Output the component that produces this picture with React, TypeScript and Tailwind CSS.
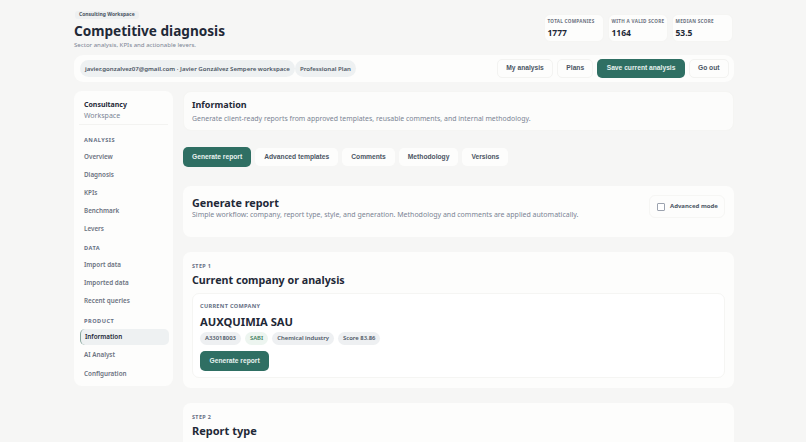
const NOTO = "font-['Noto_Sans',sans-serif]";
const ARIAL = "font-['Liberation_Sans',Arial,sans-serif]";

function Stat({ label, value, w }: { label: string; value: string; w: string }) {
  return (
    <div className={`${w} h-[28px] rounded-[6px] bg-[#fdfdfc] px-[2.5px] pt-[3px] border border-[#f5f5f3]`}>
      <div className="text-[4.6px] leading-[6px] font-bold tracking-[0.3px] text-[#6b7280] uppercase whitespace-nowrap">{label}</div>
      <div className="mt-[3px] text-[8.5px] leading-[12px] font-bold text-[#1f2937]">{value}</div>
    </div>
  );
}

function Section({ title, items, active }: { title: string; items: string[]; active?: string }) {
  return (
    <div className="mb-[7.5px]">
      <div className="px-[10px] text-[5.6px] leading-[8px] font-bold tracking-[0.5px] text-[#667085] uppercase mb-[4.5px]">{title}</div>
      <div className="flex flex-col gap-[2.1px]">
        {items.map((it) => (
          <div
            key={it}
            className={`h-[16px] flex items-center px-[4px] ml-[6px] mr-[4px] text-[6.3px] font-semibold rounded-[5px] ${
              it === active ? "bg-[#eef1f2] text-[#1f2937] border-l border-[#86a59c]" : "text-[#6b7280]"
            }`}
          >
            {it}
          </div>
        ))}
      </div>
    </div>
  );
}

function Tab({ label, active }: { label: string; active?: boolean }) {
  return (
    <div
      className={`${ARIAL} flex items-center justify-center rounded-[5px] text-[6.7px] font-bold ${
        active ? "h-[20px] bg-[#2f6f63] text-[#e8f2ef] px-[9px]" : "h-[18px] bg-[#fdfdfc] text-[#4b5563] px-[9px]"
      }`}
    >
      {label}
    </div>
  );
}

function Pill({ label, green }: { label: string; green?: boolean }) {
  return (
    <div className={`h-[13px] flex items-center rounded-full px-[5px] text-[5.9px] font-semibold ${green ? "bg-[#edf5f0] text-[#3f7f5f]" : "bg-[#eef0f2] text-[#4b5563]"}`}>
      {label}
    </div>
  );
}

export default function App() {
  return (
    <div className={`${NOTO} h-screen w-full overflow-hidden bg-[#f6f6f5] text-[#1f2937]`}>
      <div className="w-[660px] ml-[74px] pt-[11px]">
        <div className="flex justify-between h-[44px]">
          <div>
            <div className="ml-[1px] flex w-fit h-[8px] items-center rounded-[3px] bg-[#eef0f1] px-[4px] text-[5px] font-bold text-[#4b5563]">Consulting Workspace</div>
            <div className="mt-[3px] text-[13.6px] leading-[18px] font-bold text-[#1f2937]">Competitive diagnosis</div>
            <div className="mt-[1px] text-[6.1px] leading-[7px] text-[#7b8494]">Sector analysis, KPIs and actionable levers.</div>
          </div>
          <div className="flex gap-[4px] pt-[3px] pr-[1px]">
            <Stat w="w-[60px]" label="Total companies" value="1777" />
            <Stat w="w-[60px]" label="With a valid score" value="1164" />
            <Stat w="w-[61px]" label="Median score" value="53.5" />
          </div>
        </div>

        <div className="h-[27px] rounded-[9px] bg-[#fdfdfc] flex items-center justify-between pl-[6px] pr-[5.5px]">
          <div className="flex items-center">
            <div className="h-[17px] flex items-center rounded-full bg-[#eef1f2] px-[5px] text-[6.1px] font-semibold text-[#4b5563] whitespace-nowrap">javier.gonzalvez07@gmail.com · Javier Gonzálvez Sempere workspace</div>
            <div className="h-[17px] flex items-center rounded-full bg-[#eef1f2] px-[5px] text-[6.1px] font-semibold text-[#4b5563] whitespace-nowrap">Professional Plan</div>
          </div>
          <div className={`${ARIAL} flex items-center gap-[4px] text-[6.7px] font-bold text-[#4b5563]`}>
            <div className="h-[19px] px-[8.5px] flex items-center rounded-[5px] border border-[#f3f3f1]">My analysis</div>
            <div className="h-[19px] px-[8px] flex items-center rounded-[5px] border border-[#f3f3f1]">Plans</div>
            <div className="h-[19px] px-[9.5px] flex items-center rounded-[5px] bg-[#2f6f63] text-[#e8f2ef]">Save current analysis</div>
            <div className="h-[19px] px-[8px] flex items-center rounded-[5px] border border-[#f3f3f1]">Go out</div>
          </div>
        </div>

        <div className="flex gap-[10px] mt-[9px]">
          <aside className="w-[99px] h-[295px] shrink-0 rounded-[8px] bg-[#fdfdfc] pt-[8px]">
            <div className="px-[10px] text-[7px] leading-[11px] font-bold text-[#1f2937]">Consultancy</div>
            <div className="px-[10px] text-[7px] leading-[11px] text-[#7b8494]">Workspace</div>
            <div className="mx-[5px] mt-[3px] mb-[11px] border-t border-[#f3f3f1]" />
            <Section title="Analysis" items={["Overview", "Diagnosis", "KPIs", "Benchmark", "Levers"]} />
            <Section title="Data" items={["Import data", "Imported data", "Recent queries"]} />
            <Section title="Product" items={["Information", "AI Analyst", "Configuration"]} active="Information" />
          </aside>

          <main className="w-[551px]">
            <div className="h-[40px] rounded-[8px] bg-[#fcfcfb] px-[8px] pt-[6px] border border-[#f5f5f3]">
              <div className="text-[9px] leading-[13px] font-bold text-[#1f2937]">Information</div>
              <div className="mt-[3px] text-[6.9px] leading-[10px] tracking-[0.02px] text-[#7b8494]">Generate client-ready reports from approved templates, reusable comments, and internal methodology.</div>
            </div>

            <div className="flex items-center gap-[4px] mt-[16px]">
              <Tab label="Generate report" active />
              <Tab label="Advanced templates" />
              <Tab label="Comments" />
              <Tab label="Methodology" />
              <Tab label="Versions" />
            </div>

            <div className="mt-[19px] h-[51px] rounded-[8px] bg-[#fdfdfc] flex justify-between pl-[9px] pr-[9px] pt-[9px]">
              <div>
                <div className="text-[10.8px] leading-[15px] font-bold text-[#1f2937]">Generate report</div>
                <div className="mt-[1px] text-[7px] leading-[8px] text-[#7b8494]">Simple workflow: company, report type, style, and generation. Methodology and comments are applied automatically.</div>
              </div>
              <div className="h-[23px] w-[76px] rounded-[6px] border border-[#f6f6f4] flex items-center pl-[7px] gap-[5px]">
                <span className="w-[8px] h-[8px] rounded-[1px] border border-[#9ca3af] bg-white" />
                <span className="text-[6px] font-bold text-[#4b5563]">Advanced mode</span>
              </div>
            </div>

            <div className="mt-[15px] h-[136px] rounded-[8px] bg-[#fdfdfc] px-[9px] pt-[11px]">
              <div className="text-[5.4px] leading-[6px] font-bold tracking-[0.4px] text-[#667085]">STEP 1</div>
              <div className="mt-[4px] text-[10.7px] leading-[15px] font-bold text-[#1f2937]">Current company or analysis</div>
              <div className="mt-[5px] h-[85px] rounded-[7px] border border-[#f5f5f3] bg-white pl-[7px] pr-[8px] pt-[9px]">
                <div className="text-[5.6px] leading-[7px] font-bold tracking-[0.3px] text-[#667085]">CURRENT COMPANY</div>
                <div className="mt-[4px] text-[11.2px] leading-[15px] font-bold text-[#1f2937]">AUXQUIMIA SAU</div>
                <div className="mt-[3px] flex gap-[4px]">
                  <Pill label="A33018003" />
                  <Pill label="SABI" green />
                  <Pill label="Chemical industry" />
                  <Pill label="Score 83.86" />
                </div>
                <div className={`${ARIAL} mt-[6px] flex w-fit h-[20px] items-center rounded-[5px] bg-[#2f6f63] px-[9.5px] text-[6.7px] font-bold text-[#e8f2ef]`}>Generate report</div>
              </div>
            </div>

            <div className="mt-[15px] h-[60px] rounded-[8px] bg-[#fdfdfc] px-[9px] pt-[11px]">
              <div className="text-[5.4px] leading-[6px] font-bold tracking-[0.4px] text-[#667085]">STEP 2</div>
              <div className="mt-[3px] text-[11px] leading-[15px] font-bold text-[#1f2937]">Report type</div>
            </div>
          </main>
        </div>
      </div>
    </div>
  );
}
